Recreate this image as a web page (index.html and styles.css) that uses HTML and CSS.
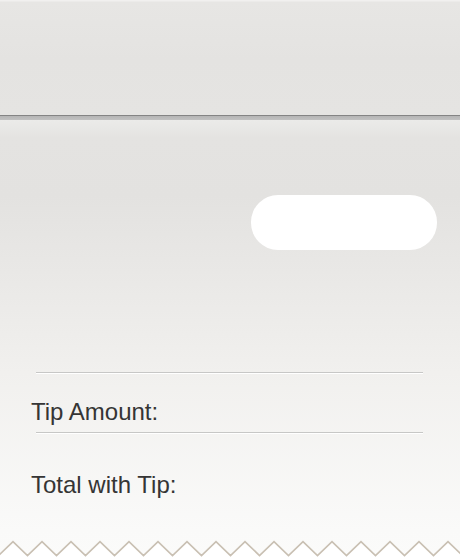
FILE: index.html
```html
<!DOCTYPE html>
<html>
<head>
<meta charset="utf-8">
<link rel="stylesheet" href="styles.css">
</head>
<body>
<div class="app">
  <header class="toolbar"></header>
  <main class="paper">
    <div class="pill"></div>
    <section class="fields">
      <div class="field">
        <div class="rule"></div>
        <div class="label label-tip">Tip Amount:</div>
      </div>
      <div class="field">
        <div class="rule"></div>
        <div class="label label-total">Total with Tip:</div>
      </div>
    </section>
    <svg class="zigzag" width="460" height="23" viewBox="0 0 460 23" xmlns="http://www.w3.org/2000/svg">
      <polygon class="tear-fill" points="-16,5.7 -1.5,19.5 13,5.7 27.5,19.5 42,5.7 56.5,19.5 71,5.7 85.5,19.5 100,5.7 114.5,19.5 129,5.7 143.5,19.5 158,5.7 172.5,19.5 187,5.7 201.5,19.5 216,5.7 230.5,19.5 245,5.7 259.5,19.5 274,5.7 288.5,19.5 303,5.7 317.5,19.5 332,5.7 346.5,19.5 361,5.7 375.5,19.5 390,5.7 404.5,19.5 419,5.7 433.5,19.5 448,5.7 462.5,19.5 477,5.7 477,30 -16,30"/>
      <polyline class="tear-line" points="-16,5.7 -1.5,19.5 13,5.7 27.5,19.5 42,5.7 56.5,19.5 71,5.7 85.5,19.5 100,5.7 114.5,19.5 129,5.7 143.5,19.5 158,5.7 172.5,19.5 187,5.7 201.5,19.5 216,5.7 230.5,19.5 245,5.7 259.5,19.5 274,5.7 288.5,19.5 303,5.7 317.5,19.5 332,5.7 346.5,19.5 361,5.7 375.5,19.5 390,5.7 404.5,19.5 419,5.7 433.5,19.5 448,5.7 462.5,19.5 477,5.7"/>
    </svg>
  </main>
</div>
</body>
</html>
```

FILE: styles.css
```css
html, body {
  margin: 0;
  padding: 0;
  background: #ffffff;
}

.app {
  width: 460px;
  height: 559px;
  overflow: hidden;
  display: flex;
  flex-direction: column;
  font-family: "Liberation Sans", Arial, sans-serif;
}

.toolbar {
  height: 115px;
  flex: none;
  background: linear-gradient(#f1f0ef 0, #f1f0ef 1px, #e7e6e4 2px, #e4e3e1 60px, #e5e4e2 115px);
  border-bottom: 1px solid #848484;
}

.paper {
  flex: 1;
  display: flex;
  flex-direction: column;
  background: linear-gradient(#b5b5b5 0, #c1c1c1 4px, #ebebe9 4px, #e4e3e1 22px, #e3e2e0 80px, #f1f0ee 256px, #fafaf9 414px, #fbfbfa 443px);
}

.pill {
  margin: 79px 0 0 251px;
  width: 186px;
  height: 55px;
  border-radius: 27px;
  background: #ffffff;
}

.fields {
  margin-top: 122px;
  display: flex;
  flex-direction: column;
}

.rule {
  margin: 0 37px 0 36px;
  height: 1px;
  background: #c7c7c6;
  box-shadow: 0 1px 0 #ffffff;
}

.label {
  padding-left: 31px;
  font-size: 24px;
  line-height: 27px;
  color: #353535;
}

.label-tip {
  margin-top: 25px;
  margin-bottom: 7px;
}

.label-total {
  margin-top: 38px;
}

.zigzag {
  display: block;
  margin-top: 38px;
  flex: none;
}

.tear-fill {
  fill: #ffffff;
}

.tear-line {
  fill: none;
  stroke: #c9c0b3;
  stroke-width: 1.7;
}
```
